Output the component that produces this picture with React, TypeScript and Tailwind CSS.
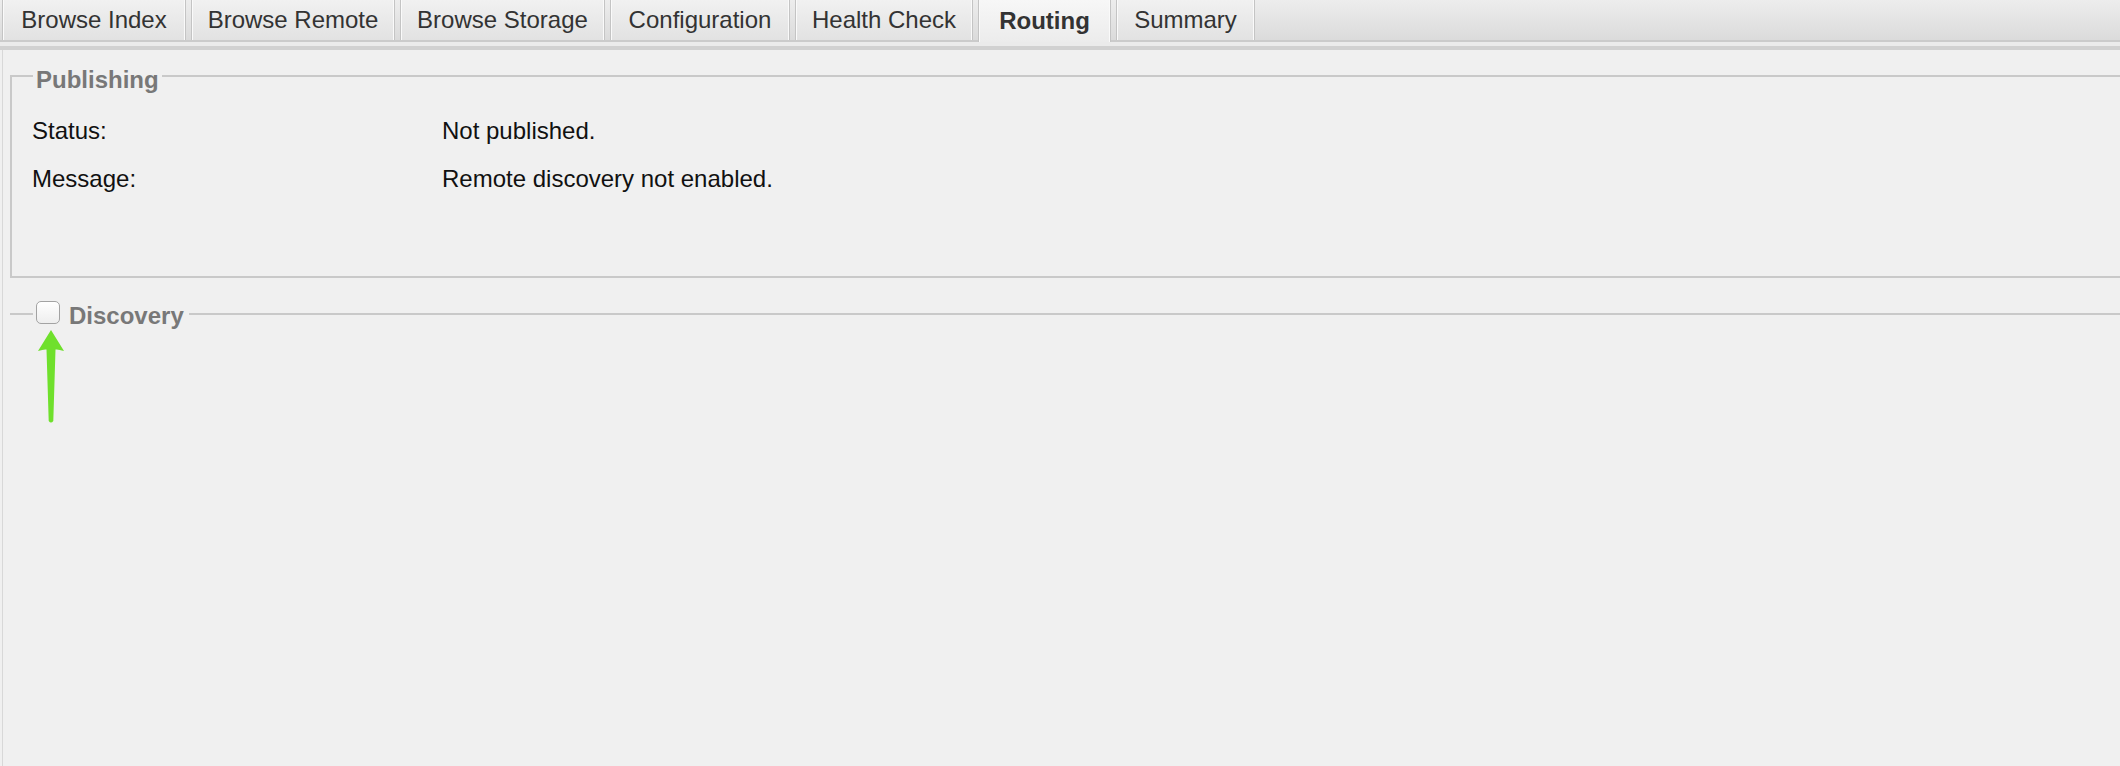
import { useState } from "react";

const tabs = [
  { label: "Browse Index", w: "w-[184px]" },
  { label: "Browse Remote", w: "w-[204px]" },
  { label: "Browse Storage", w: "w-[205px]" },
  { label: "Configuration", w: "w-[180px]" },
  { label: "Health Check", w: "w-[178px]" },
  { label: "Routing", w: "w-[133px]" },
  { label: "Summary", w: "w-[139px]" },
];

export default function App() {
  const [active, setActive] = useState("Routing");
  const [discovery, setDiscovery] = useState(false);

  return (
    <div className="relative w-full h-[766px] overflow-hidden bg-[#f0f0f0] font-['Liberation_Sans',Arial,sans-serif] text-[24px] leading-[28px]">
      {/* Tab strip */}
      <div className="flex items-start gap-[5px] pl-[2px] h-[42px] bg-linear-to-b from-[#ededed] to-[#dadada] shadow-[inset_0_-2px_0_#cbcbcb]">
        {tabs.map((t) => {
          const isActive = t.label === active;
          return (
            <button
              key={t.label}
              onClick={() => setActive(t.label)}
              className={`${t.w} shrink-0 flex items-center justify-center border-x border-[#c4c4c4] shadow-[inset_1px_0_0_#fafafa,inset_-1px_0_0_#fafafa] text-[#333] ${
                isActive
                  ? "h-[42px] font-bold bg-linear-to-b from-[#f7f7f7] to-[#ececec]"
                  : "h-[40px] bg-linear-to-b from-[#f1f1f1] to-[#e2e2e2]"
              }`}
            >
              {t.label}
            </button>
          );
        })}
      </div>
      <div className="h-[4px] bg-[#ebebeb]" />
      <div className="h-[4px] bg-[#d1d1d1]" />

      {/* Panel body */}
      <div className="ml-[2px] h-full border-l border-[#d8d8d8] pl-[7px] overflow-hidden">
        <fieldset className="mt-[8px] mr-[-20px] border-2 border-[#c9c9c9] pl-[20px] pt-[23px] pb-[83px]">
          <legend className="ml-[1px] px-[3px] pt-2 font-bold text-[#787878]">
            Publishing
          </legend>
          <div className="grid grid-cols-[410px_1fr] gap-y-[20px] text-[#111]">
            <div>Status:</div>
            <div>Not published.</div>
            <div>Message:</div>
            <div>Remote discovery not enabled.</div>
          </div>
        </fieldset>

        <fieldset className="mt-[20px] mr-[-20px] border-0 border-t-2 border-[#c9c9c9] pl-[23px]">
          <legend className="px-[3px] pr-[5px]">
            <label className="flex items-start gap-[9px] font-bold text-[#787878] cursor-pointer">
              <input
                type="checkbox"
                checked={discovery}
                onChange={(e) => setDiscovery(e.target.checked)}
                className="appearance-none mt-[3px] w-[24px] h-[23px] rounded-[5px] border border-[#a3a3a3] bg-linear-to-b from-white to-[#eeeeee] shadow-[inset_0_1px_0_#ffffff]"
              />
              <span className="pt-[4px]">Discovery</span>
            </label>
          </legend>
        </fieldset>
      </div>

      {/* Annotation arrow */}
      <svg
        className="absolute left-[36px] top-[328px]"
        width="30"
        height="98"
        viewBox="0 0 30 98"
      >
        <path
          d="M15 2 L28 23 Q22 21 19.5 21.5 L17.3 93 Q15 96 12.7 93 L10.5 21.5 Q8 21 2 23 Z"
          fill="#6fe02c"
        />
      </svg>
    </div>
  );
}
